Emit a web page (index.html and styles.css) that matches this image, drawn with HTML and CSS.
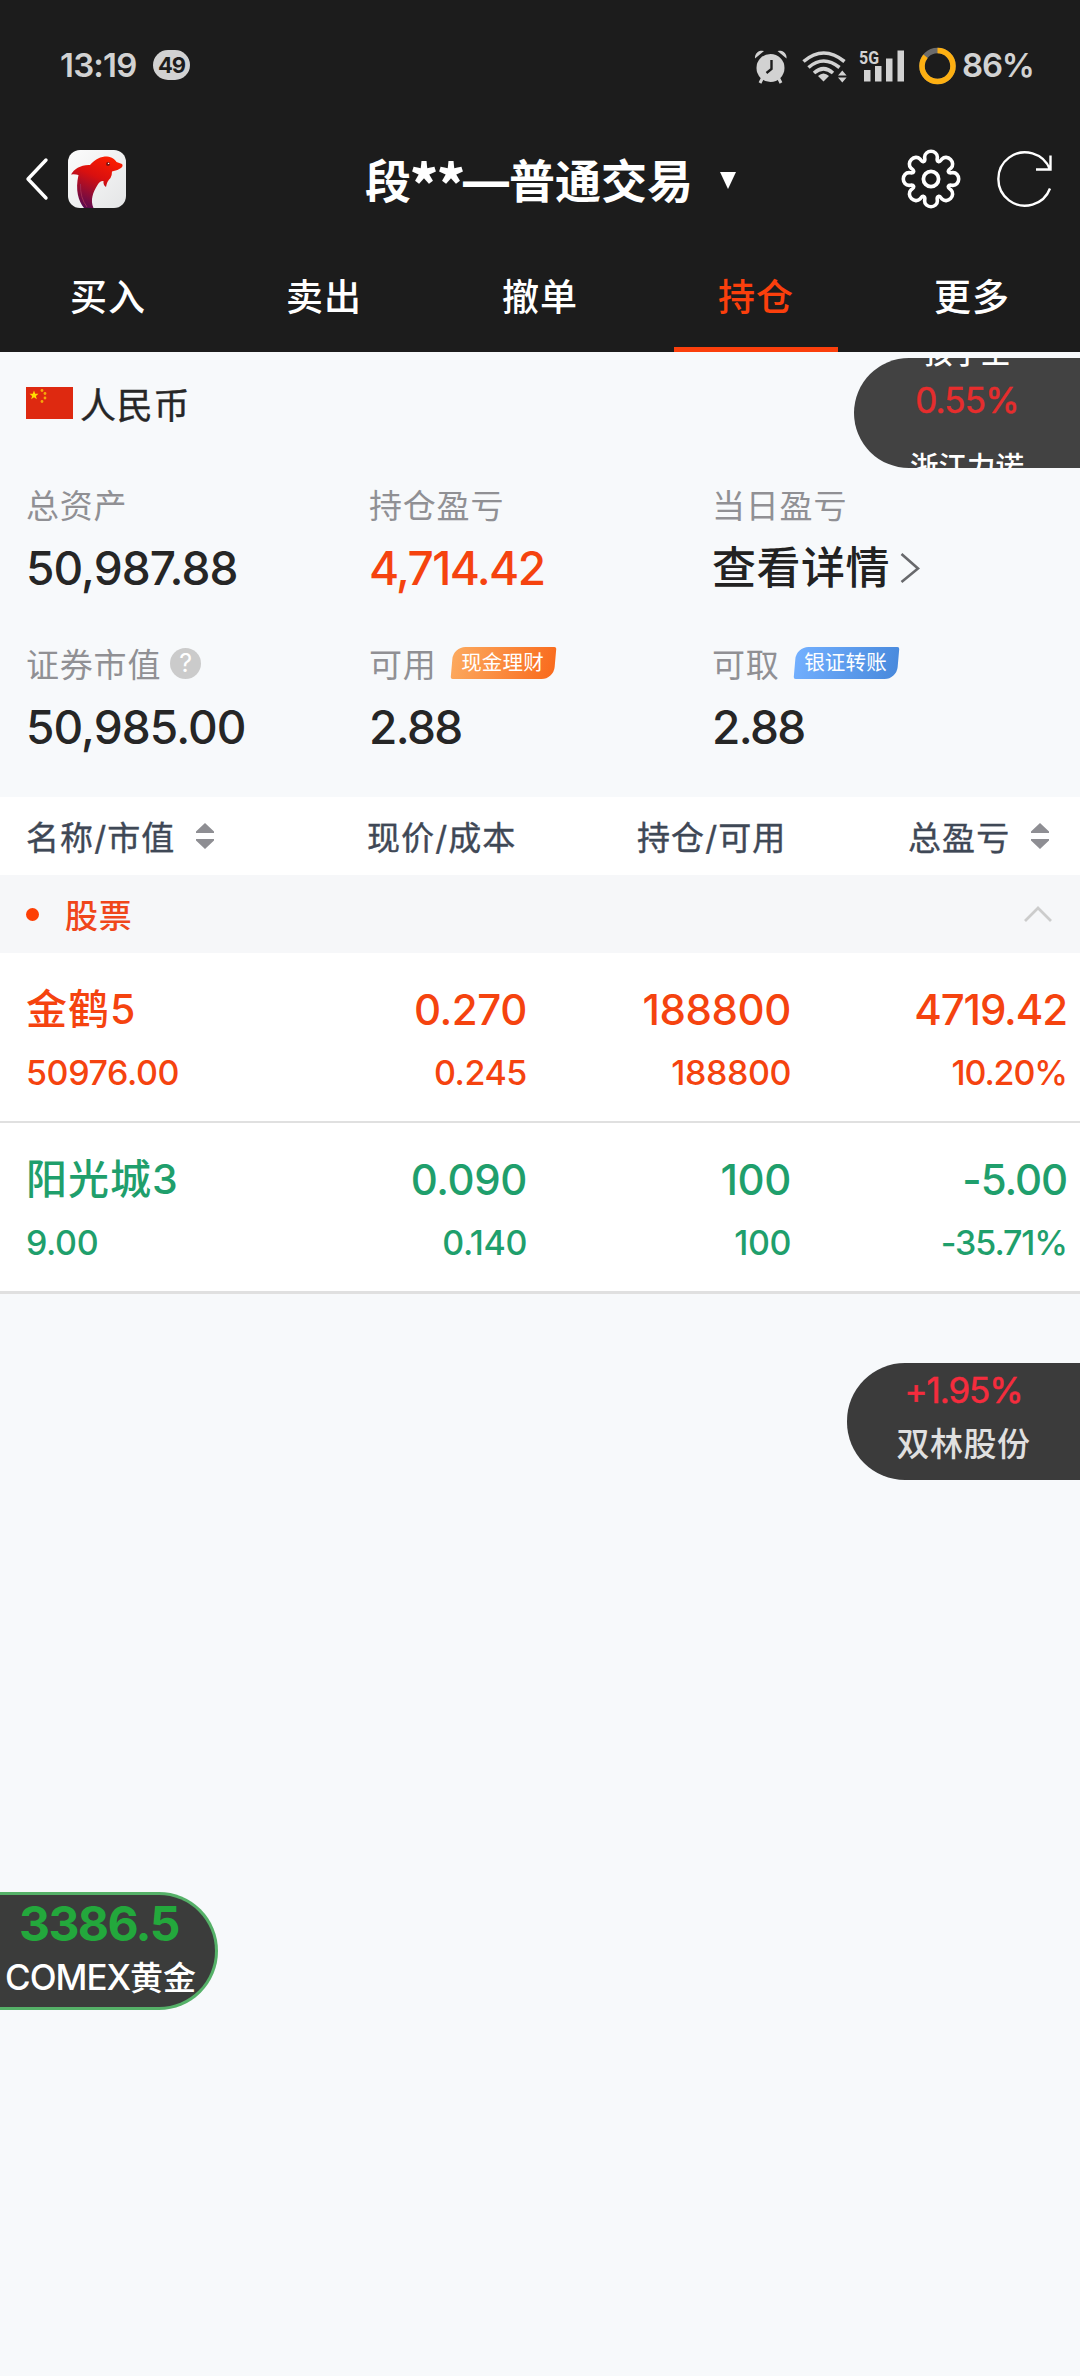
FILE: index.html
```html
<!DOCTYPE html>
<html lang="zh-CN">
<head>
<meta charset="UTF-8">
<title>普通交易 - 持仓</title>
<link rel="stylesheet" href="styles.css">
</head>
<body>
<header class="top">
  <div class="status">
    <span class="status-time">13:19</span>
    <span class="status-badge">49</span>
    <svg class="status-icons" width="206" height="42" viewBox="0 0 206 42">
      <g fill="#d2d2d2">
        <circle cx="20.500" cy="24" r="14"/>
        <path d="M5 14.500a7 7 0 0 1 9-7.500zM36.500 14.500a7 7 0 0 0-9-7.500z"/>
        <path d="M12.500 34l-2.500 5M28.500 34l2.500 5" stroke="#d2d2d2" stroke-width="3"/>
        <path d="M21.500 16v9l-5 4" fill="none" stroke="#1c1c1c" stroke-width="2.400"/>
        <path d="M73.500 37.500l-5.500-5.500q5.500-5 11 0z"/>
        <path d="M88 31.500l4.300-5 4.300 5zM88 33.500l4.300 5 4.300-5z"/>
        <path d="M114 26h6.500v11.500H114zM125 22h6.500v15.500H125zM136 14.500h6.500v23H136zM147.500 6.500h6.500v31h-6.500z"/>
      </g>
      <g fill="none" stroke="#d2d2d2" stroke-width="3.600">
        <path d="M53.500 17.500q20-17 41 0"/>
        <path d="M58.500 23.500q15-13 31 0"/>
        <path d="M64 29q9.500-8.500 19 0"/>
      </g>
      <text class="net" x="109" y="19.500" textLength="20" lengthAdjust="spacingAndGlyphs">5G</text>
      <circle cx="187.500" cy="22" r="15.500" fill="none" stroke="#6b6b6b" stroke-width="5.500"/>
      <circle cx="187.500" cy="22" r="15.500" fill="none" stroke="#fdb012" stroke-width="5.500" pathLength="100" stroke-dasharray="86 14" transform="rotate(-90 187.500 22)"/>
    </svg>
    <span class="status-power">86%</span>
  </div>
  <div class="nav">
    <div class="nav-left">
      <svg width="24" height="44" viewBox="0 0 24 44"><path d="M21 3L3 22l18 19" fill="none" stroke="#fff" stroke-width="3.400" stroke-linecap="round" stroke-linejoin="round"/></svg>
      <svg class="logo" width="58" height="58" viewBox="0 0 58 58">
        <defs>
          <linearGradient id="fish" x1=".7" y1="0" x2=".25" y2="1"><stop offset="0" stop-color="#fb1d00"/><stop offset=".4" stop-color="#d9100f"/><stop offset="1" stop-color="#560a52"/></linearGradient>
          <linearGradient id="tile" x1="0" y1="0" x2="1" y2="1"><stop offset="0" stop-color="#fcfcfc"/><stop offset="1" stop-color="#e4e5e6"/></linearGradient>
        </defs>
        <rect width="58" height="58" rx="12" fill="url(#tile)"/>
        <path d="M3 24.500C6 19 13 14.500 22 15C27 9 33 6.500 39 6.500C44 7 47 9.500 48.500 12L54 14Q55.500 16 53 18Q49 21 44 21.500Q44 26 42.500 28Q39 31 38 37Q35 35 35.500 31Q32 30.500 29.500 35C25 42 22 50 25.500 58H16C10.500 51 7 40 10.500 25Q7 24 3 24.500z" fill="url(#fish)"/>
        <path d="M12.500 34Q12 48 19 57" fill="none" stroke="#a02a50" stroke-width="1"/>
        <circle cx="40" cy="14" r="2" fill="#7c1712"/><circle cx="40.600" cy="13.400" r=".7" fill="#fff"/>
      </svg>
    </div>
    <h1 class="nav-title">段<span class="mask">**</span>—普通交易<svg class="caret" width="16" height="17" viewBox="0 0 16 17"><path d="M0 0h16L8 17z" fill="#fff"/></svg></h1>
    <div class="nav-right">
      <svg width="60" height="60" viewBox="-30 -30 60 60">
        <defs><path id="lobe" d="M-7.270-17.550C-5.300-18.400-6.400-20.300-6.400-22A6.400 5.700 0 0 1 6.400-22C6.400-20.300 5.300-18.400 7.270-17.550"/></defs>
        <g fill="none" stroke="#fff" stroke-width="3.600" stroke-linecap="round">
          <use href="#lobe"/><use href="#lobe" transform="rotate(45)"/><use href="#lobe" transform="rotate(90)"/><use href="#lobe" transform="rotate(135)"/>
          <use href="#lobe" transform="rotate(180)"/><use href="#lobe" transform="rotate(225)"/><use href="#lobe" transform="rotate(270)"/><use href="#lobe" transform="rotate(315)"/>
          <circle r="7.600" stroke-width="3.800"/>
        </g>
      </svg>
      <svg width="60" height="60" viewBox="-30 -30 60 60">
        <path d="M25 9.500A26.700 26.700 0 1 1 25-9.500M25.500-23.500V-9.500H11" fill="none" stroke="#fff" stroke-width="2.400"/>
      </svg>
    </div>
  </div>
  <nav class="tabs">
    <span class="tab">买入</span>
    <span class="tab">卖出</span>
    <span class="tab">撤单</span>
    <span class="tab tab-on">持仓</span>
    <span class="tab">更多</span>
  </nav>
</header>

<section class="summary">
  <div class="currency">
    <svg width="47" height="32" viewBox="0 0 47 32">
      <path d="M0 0h47v32H0z" fill="#de2910"/>
      <path d="M8 3.500l1.200 3.200 3.300.1-2.600 2.100.9 3.300L8 10.300l-2.800 1.900.9-3.300-2.600-2.100 3.300-.1z" fill="#ffde00"/>
      <g fill="#f5a80a"><circle cx="16" cy="3.500" r="1.400"/><circle cx="19" cy="6.500" r="1.400"/><circle cx="19" cy="11" r="1.400"/><circle cx="16" cy="14.500" r="1.400"/></g>
    </svg>
    <span>人民币</span>
  </div>
  <dl class="stats">
    <div class="stat"><dt>总资产</dt><dd class="total">50,987.88</dd></div>
    <div class="stat"><dt>持仓盈亏</dt><dd class="up">4,714.42</dd></div>
    <div class="stat"><dt>当日盈亏</dt><dd class="detail">查看详情<svg width="20" height="32" viewBox="0 0 20 32"><path d="M1.500 2L18 16.500 1.500 30" fill="none" stroke="#68696c" stroke-width="2.600"/></svg></dd></div>
    <div class="stat"><dt>证券市值<span class="help">?</span></dt><dd class="total">50,985.00</dd></div>
    <div class="stat"><dt>可用<span class="tag tag-cash"><b>现金理财</b></span></dt><dd>2.88</dd></div>
    <div class="stat"><dt>可取<span class="tag tag-bank"><b>银证转账</b></span></dt><dd>2.88</dd></div>
  </dl>
</section>

<section class="holdings">
  <div class="row head">
    <span>名称/市值<svg class="sort" width="20" height="28" viewBox="0 0 20 28"><path d="M10 1l9 8.500V11H1V9.500zM10 27l9-8.500V17H1v1.500z" fill="#8e8e93"/></svg></span>
    <span>现价/成本</span>
    <span>持仓/可用</span>
    <span>总盈亏<svg class="sort" width="20" height="28" viewBox="0 0 20 28"><path d="M10 1l9 8.500V11H1V9.500zM10 27l9-8.500V17H1v1.500z" fill="#8e8e93"/></svg></span>
  </div>
  <div class="group">
    <i class="dot"></i><span>股票</span>
    <svg width="30" height="18" viewBox="0 0 30 18"><path d="M2 16L15 3l13 13" fill="none" stroke="#ccc" stroke-width="2.800"/></svg>
  </div>
  <div class="row stock up">
    <div><p class="name">金鹤5</p><p>50976.00</p></div>
    <div><p>0.270</p><p>0.245</p></div>
    <div><p>188800</p><p>188800</p></div>
    <div class="gain"><p>4719.42</p><p>10.20%</p></div>
  </div>
  <div class="row stock down last">
    <div><p class="name">阳光城3</p><p>9.00</p></div>
    <div><p>0.090</p><p>0.140</p></div>
    <div><p>100</p><p>100</p></div>
    <div class="gain"><p>-5.00</p><p>-35.71%</p></div>
  </div>
</section>

<aside class="float float-a"><span>孩子王</span><span class="pct">0.55%</span><span>浙江力诺</span></aside>
<aside class="float float-b"><span class="pct">+1.95%</span><span>双林股份</span></aside>
<aside class="float float-c"><span class="price">3386.5</span><span class="gold"><em>COMEX</em>黄金</span></aside>
</body>
</html>
```
FILE: styles.css
```css
* { box-sizing: border-box; margin: 0; padding: 0; }
body {
  position: relative;
  width: 1080px;
  height: 2376px;
  overflow: hidden;
  background: #f7f9fb;
  color: #262626;
  font-family: Inter, "Noto Sans CJK SC", sans-serif;
  font-weight: 500;
  white-space: nowrap;
}
svg { display: block; flex: none; }

.top { height: 352px; background: #1c1c1c; color: #fff; }
.status { display: flex; align-items: center; height: 130px; padding-left: 60px; color: #d2d2d2; }
.status-time { width: 93px; font-size: 33px; font-weight: 600; letter-spacing: -0.8px; }
.status-badge {
  width: 37px; height: 30px; border-radius: 15px;
  background: #d2d2d2; color: #1c1c1c;
  font-size: 22px; font-weight: 700; line-height: 30px; text-align: center; letter-spacing: -1px;
}
.status-icons { margin-left: 560px; }
.net { font: 700 18px Roboto, sans-serif; fill: #d2d2d2; }
.status-power { margin-left: 6px; font-size: 33px; font-weight: 600; letter-spacing: -1.2px; }

.nav { display: flex; align-items: center; height: 98px; padding: 0 25px; }
.nav-left { display: flex; align-items: center; gap: 19px; width: 340px; }
.nav-title { display: flex; align-items: center; flex: 1; font-size: 46px; font-weight: 700; line-height: 60px; padding-top: 3px; }
.mask { display: flex; justify-content: center; width: 52px; font-size: 53px; font-weight: 900; letter-spacing: -1px; font-family: "Noto Sans CJK SC", sans-serif; line-height: 60px; }
.caret { margin-left: 27px; }
.nav-right { display: flex; gap: 34px; }

.tabs { display: grid; grid-template-columns: repeat(5, 1fr); height: 124px; }
.tab { justify-self: center; width: 164px; border-bottom: 5px solid transparent; font-size: 37px; line-height: 139px; text-align: center; letter-spacing: 1px; height: 124px; }
.tab-on { border-color: #fb3f0c; color: #fb3f0c; }

.summary { height: 445px; padding-left: 26px; }
.currency { display: flex; align-items: center; gap: 7px; height: 102px; font-size: 36px; font-weight: 400; letter-spacing: 0.8px; -webkit-text-stroke: 0.4px; }
.stats { display: grid; grid-template-columns: 343px 343px 343px; grid-auto-rows: 159px; padding-top: 25px; }
dt { display: flex; align-items: center; height: 50px; font-size: 33px; font-weight: 400; letter-spacing: 0.8px; color: #909094; }
dd { height: 78px; font-size: 46px; line-height: 78px; letter-spacing: -1.6px; }
.total { letter-spacing: -0.9px; }
.up { color: #f5430f; }
.down { color: #1f9f6c; }
.detail { display: flex; align-items: center; gap: 10px; font-size: 44px; letter-spacing: 0.5px; color: #222; }
.help {
  width: 31px; height: 31px; margin-left: 9px; border-radius: 50%;
  background: #cbcbcb; color: #fff; font-size: 25px; line-height: 31px; text-align: center; letter-spacing: 0;
}
.tag {
  width: 103px; height: 32px; margin-left: 15px; transform: skewX(-5deg);
  border-radius: 12px 2px 12px 2px; color: #fff; font-size: 20.500px; line-height: 31px; text-align: center; letter-spacing: 0.2px;
}
.tag b { display: block; margin-left: -2px; font-weight: 400; transform: skewX(5deg); }
.tag-cash { background: linear-gradient(100deg, #fcaa5f, #f96a1c); }
.tag-bank { background: linear-gradient(100deg, #73b0ff, #4889dc); }

.row { display: grid; background: #fff; }
.head { grid-template-columns: 341px 270px 271px 1fr; align-items: center; height: 78px; padding-left: 26px; font-size: 33px; font-weight: 400; letter-spacing: 1.1px; color: #3f4856; -webkit-text-stroke: 0.4px; }
.head span { display: flex; align-items: center; }
.sort { margin-left: 20px; }
.group { display: flex; align-items: center; height: 78px; padding: 0 27px 0 26px; background: #f6f7f9; color: #f0461a; font-size: 33px; letter-spacing: 0.8px; }
.dot { width: 13px; height: 13px; margin-right: 26px; border-radius: 50%; background: #fd3f05; }
.group svg { margin-left: auto; }
.stock { grid-template-columns: 251px 250px 264px 276px; height: 170px; padding: 31px 13px 0 26px; border-bottom: 2px solid #e0e0e0; text-align: right; font-size: 34px; line-height: 76px; letter-spacing: -0.4px; }
.stock.last { height: 171px; border-bottom-width: 3px; }
.stock p { height: 76px; }
.stock p:first-child { height: 51px; line-height: 51px; font-size: 42px; }
.stock > :first-child { text-align: left; }
.stock p.name { font-size: 41px; letter-spacing: 1px; }
.stock .gain { letter-spacing: -1.1px; }

.float { position: absolute; display: flex; flex-direction: column; overflow: hidden; color: #fff; }
.float-a { top: 358px; right: 0; width: 226px; height: 110px; border-radius: 55px 0 0 55px; background: #424242; align-items: center; font-size: 28.500px; line-height: 36px; }
.float-a span:first-child { margin-top: -22px; }
.float-a .pct { margin: 10px 0 31px; color: #e62d2d; font-size: 35px; font-weight: 400; letter-spacing: -0.8px; -webkit-text-stroke: 0.5px; }
.float-b { top: 1363px; right: 0; width: 233px; height: 117px; border-radius: 58px 0 0 58px; background: #3b3b3b; align-items: center; color: #e0e0e0; font-size: 33px; line-height: 54px; letter-spacing: 0.5px; }
.float-b .pct { color: #f52c3d; font-size: 35px; font-weight: 400; letter-spacing: -1.1px; -webkit-text-stroke: 0.5px; }
.float-c { top: 1892px; left: 0; width: 218px; height: 118px; border: 3px solid #55b168; border-left: 0; border-radius: 0 59px 59px 0; background: #3b3c3b; padding: 0 0 0 5px; line-height: 57px; }
.price { padding-left: 14px; color: #23a83c; font-size: 48px; font-weight: 700; letter-spacing: -1.6px; }
.gold { font-size: 33px; line-height: 50px; }
.gold em { font-style: normal; font-size: 35px; letter-spacing: -1px; }
```
